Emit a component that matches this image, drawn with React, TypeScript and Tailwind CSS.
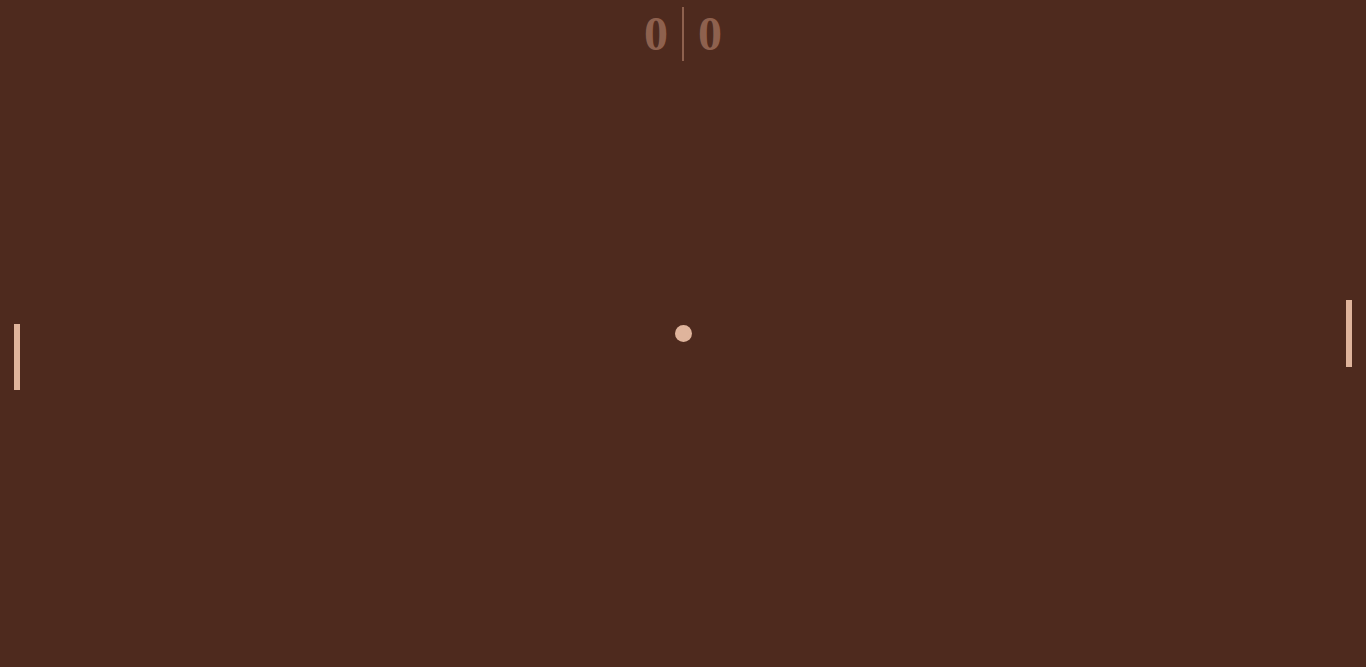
export default function App() {
  return (
    <div className="relative h-[667px] w-[1366px] overflow-hidden bg-[#4e2a1e]">
      <div className="flex items-center justify-center gap-[14px] pt-[7px]" style={{ fontFamily: '"Liberation Serif", "Times New Roman", serif' }}>
        <span className="text-[48px] font-bold leading-none text-[#8e614e]">0</span>
        <div className="h-[54px] w-[2px] bg-[#8e614e]" />
        <span className="text-[48px] font-bold leading-none text-[#8e614e]">0</span>
      </div>
      <div className="absolute left-[14px] top-[324px] h-[66px] w-[6px] bg-[#dfb49c]" />
      <div className="absolute left-[1346px] top-[300px] h-[67px] w-[6px] bg-[#dfb49c]" />
      <div className="absolute left-[675px] top-[325px] h-[17px] w-[17px] rounded-full bg-[#dfb49c]" />
    </div>
  );
}
